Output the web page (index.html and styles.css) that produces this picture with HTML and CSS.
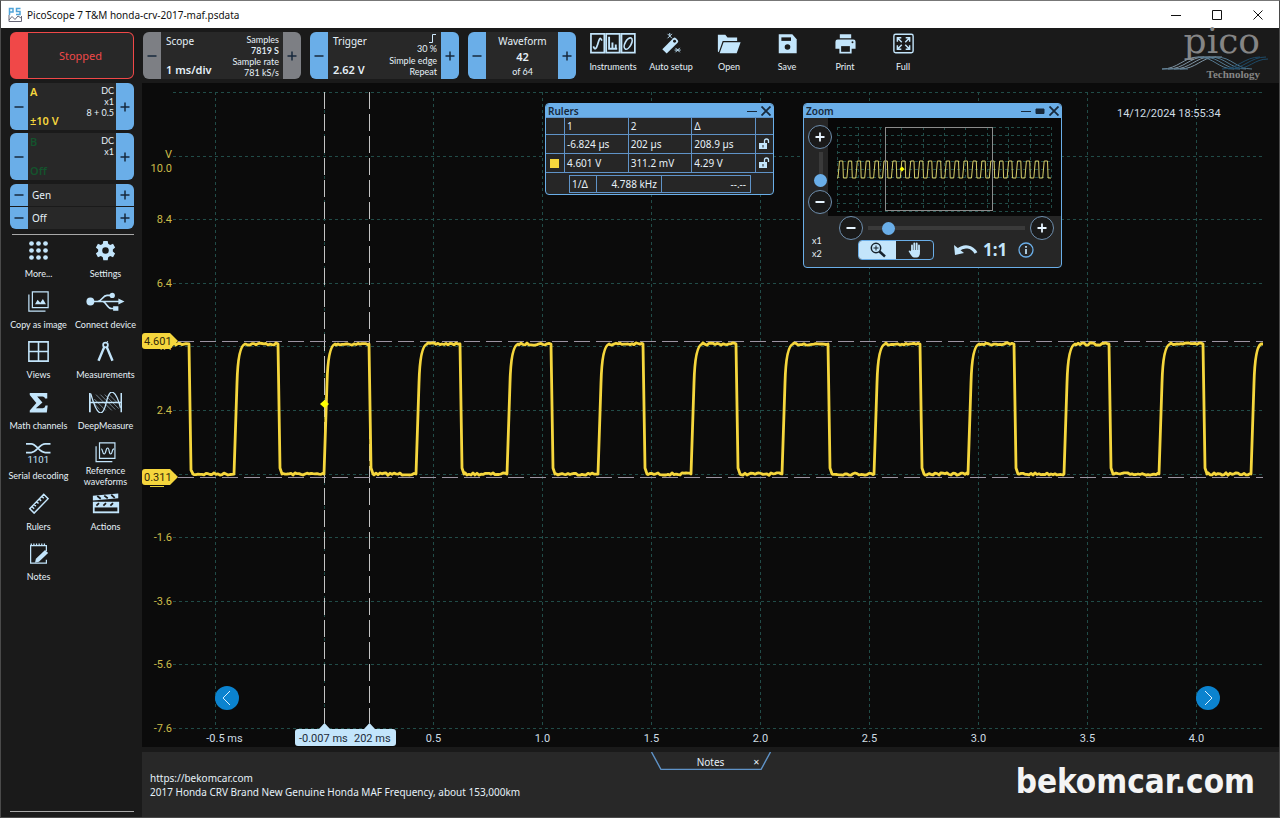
FILE: index.html
```html
<!DOCTYPE html>
<html lang="en">

<head>
  <meta charset="utf-8">
  <meta name="viewport" content="width=device-width, initial-scale=1">
  <title>PicoScope 7 T&amp;M honda-crv-2017-maf.psdata</title>
  <link rel="stylesheet" href="styles.css">
</head>

<body>
  <div class="app">
    <header class="titlebar">
      <svg class="app-icon" viewBox="0 0 14 16"><path d="M1.500 8V1.500h3.500v3.500H1.500M12.500 1.500H8.500v3h3.500v3H8" fill="none" stroke="#4fa3d8" stroke-width="1.500"/><path d="M1 8v6.500h12.500V9M1 13l3-3.500 3 3 3-3.500 3 2" fill="none" stroke="#667" stroke-width="1"/></svg>
      <h1>PicoScope 7 T&amp;M honda-crv-2017-maf.psdata</h1>
      <div class="window-buttons">
        <button aria-label="Minimize"><svg viewBox="0 0 10 10"><path d="M0 5.500h10"/></svg></button>
        <button aria-label="Maximize"><svg viewBox="0 0 10 10"><path d="M.5.5h9v9h-9z"/></svg></button>
        <button aria-label="Close"><svg viewBox="0 0 10 10"><path d="M.5.5l9 9M9.500.5l-9 9"/></svg></button>
      </div>
    </header>

    <div class="toolbar">
      <button class="stopped">Stopped</button>
      <div class="stepper scope">
        <button class="step" aria-label="Scope minus"><svg viewBox="0 0 12 12"><path d="M1.500 6h9"/></svg></button>
        <div class="stepper-body">
          <div class="col"><span>Scope</span><b>1 ms/div</b></div>
          <div class="col right small"><span>Samples</span><b>7819 S</b><span>Sample rate</span><span>781 kS/s</span></div>
        </div>
        <button class="step" aria-label="Scope plus"><svg viewBox="0 0 12 12"><path d="M1.500 6h9M6 1.500v9"/></svg></button>
      </div>
      <div class="stepper trigger">
        <button class="step" aria-label="Trigger minus"><svg viewBox="0 0 12 12"><path d="M1.500 6h9"/></svg></button>
        <div class="stepper-body">
          <div class="col"><span>Trigger</span><b>2.62 V</b></div>
          <div class="col right small">
            <svg class="edge" viewBox="0 0 8 9"><path d="M0 8.500h3.500v-8H7" fill="none" stroke="#cfe9fb"/></svg>
            <span>30 %</span><span>Simple edge</span><span>Repeat</span>
          </div>
        </div>
        <button class="step" aria-label="Trigger plus"><svg viewBox="0 0 12 12"><path d="M1.500 6h9M6 1.500v9"/></svg></button>
      </div>
      <div class="stepper waveform">
        <button class="step" aria-label="Waveform minus"><svg viewBox="0 0 12 12"><path d="M1.500 6h9"/></svg></button>
        <div class="stepper-body">
          <div class="col center"><span>Waveform</span><b>42</b><span class="of">of 64</span></div>
        </div>
        <button class="step" aria-label="Waveform plus"><svg viewBox="0 0 12 12"><path d="M1.500 6h9M6 1.500v9"/></svg></button>
      </div>

      <nav class="actions">
        <button class="tool">
          <svg class="wide" viewBox="0 0 48 22"><g fill="none" stroke="#c3e5fb" stroke-width="1.800"><path d="M1 1h14v19.500H1zM17 1h14v19.500H17zM33 1h14v19.500H33z"/><path d="M3.500 14c1.500 4 3 3 4.500-2S10.500 3 12.500 8"/><path d="M20 4v12.500M23.500 10v6.500M27 12v4.500M19 16.500h9.500" stroke-width="2"/><ellipse cx="40" cy="11" rx="3.200" ry="6.500" transform="rotate(28 40 11)"/></g></svg>
          <span>Instruments</span>
        </button>
        <button class="tool">
          <svg viewBox="0 0 24 24"><g fill="#c3e5fb"><path d="M1.500 18.500L14 6q1.500-1.500 3 0l2 2q1.500 1.500 0 3L6.500 23.500z"/><circle cx="15.500" cy="9.500" r="1.700" fill="#1a1a1a"/></g><path d="M7.500 1l5 5M12.500 1l-5 5M10 0v3M16.500 17l5 5M21.500 17l-5 5M15.500 19.500h7" stroke="#c3e5fb" stroke-width="1.100"/></svg>
          <span>Auto setup</span>
        </button>
        <button class="tool">
          <svg class="wide" viewBox="0 0 28 24"><path d="M1 21V2h8.500l2.500 3h11v4H6.500L2 22zM7.500 10.500H27L22.500 23H3z" fill="#c3e5fb"/></svg>
          <span>Open</span>
        </button>
        <button class="tool">
          <svg viewBox="0 0 24 24"><path d="M2 1.500h15.500L22.500 7v16H2z" fill="#c3e5fb"/><path d="M5 5h11v4H5z" fill="#1a1a1a"/><circle cx="12" cy="16" r="3.200" fill="#1a1a1a"/></svg>
          <span>Save</span>
        </button>
        <button class="tool">
          <svg viewBox="0 0 24 24"><path d="M5.500 1.500h13V6h-13zM3 7.500h18q2.500 0 2.500 2.500v8H19v5.500H5V18H.5v-8Q.5 7.500 3 7.500z" fill="#c3e5fb"/><path d="M7 15h10v6.500H7z" fill="#1a1a1a"/><circle cx="20" cy="10.500" r="1.100" fill="#1a1a1a"/></svg>
          <span>Print</span>
        </button>
        <button class="tool">
          <svg viewBox="0 0 24 24"><rect x="1" y="1.500" width="22" height="21" rx="2" fill="none" stroke="#c3e5fb" stroke-width="1.600"/><path d="M5 10V5.500h4.500M5 5.500l5 5M19 10V5.500h-4.500M19 5.500l-5 5M5 14v4.500h4.500M5 18.500l5-5M19 14v4.500h-4.500M19 18.500l-5-5" fill="none" stroke="#c3e5fb" stroke-width="1.700"/></svg>
          <span>Full</span>
        </button>
      </nav>

      <div class="logo">
        <svg class="logo-waves" viewBox="0 0 108 14"><g fill="none" stroke-width="1"><g stroke="#8095a5"><path d="M0 13C16 13 22 1 36 1h24"/><path d="M6 13C22 13 28 1 42 1"/><path d="M12 13C28 13 34 1 48 1"/><path d="M18 13C34 13 40 1 54 1"/></g><g stroke="#54788f"><path d="M36 1c16 0 20 12 36 12"/><path d="M42 1c16 0 20 12 36 12"/><path d="M48 1c16 0 20 12 36 12"/><path d="M54 1c16 0 20 12 36 12"/><path d="M0 13h26"/></g><g stroke="#1d4a68"><path d="M66 13c16 0 22-12 38-12M72 13c16 0 20-10 34-10M60 13c16 0 22-12 38-12"/></g></g></svg>
        <span class="logo-name">pico</span>
        <span class="logo-sub">Technology</span>
      </div>
    </div>

    <div class="main">
      <aside class="sidebar">
        <div class="stepper channel">
          <button class="step" aria-label="A minus"><svg viewBox="0 0 12 12"><path d="M1.500 6h9"/></svg></button>
          <div class="stepper-body ch-a">
            <div class="col"><b>A</b><b>±10 V</b></div>
            <div class="col right small"><span>DC</span><span>x1</span><span>8 + 0.5</span></div>
          </div>
          <button class="step" aria-label="A plus"><svg viewBox="0 0 12 12"><path d="M1.500 6h9M6 1.500v9"/></svg></button>
        </div>
        <div class="stepper channel">
          <button class="step" aria-label="B minus"><svg viewBox="0 0 12 12"><path d="M1.500 6h9"/></svg></button>
          <div class="stepper-body ch-b">
            <div class="col"><b>B</b><b>Off</b></div>
            <div class="col right small"><span>DC</span><span>x1</span></div>
          </div>
          <button class="step" aria-label="B plus"><svg viewBox="0 0 12 12"><path d="M1.500 6h9M6 1.500v9"/></svg></button>
        </div>
        <div class="gen">
          <div class="gen-row">
            <button class="step" aria-label="Gen minus"><svg viewBox="0 0 12 12"><path d="M1.500 6h9"/></svg></button>
            <span>Gen</span>
            <button class="step" aria-label="Gen plus"><svg viewBox="0 0 12 12"><path d="M1.500 6h9M6 1.500v9"/></svg></button>
          </div>
          <div class="gen-row">
            <button class="step" aria-label="Off minus"><svg viewBox="0 0 12 12"><path d="M1.500 6h9"/></svg></button>
            <span>Off</span>
            <button class="step" aria-label="Off plus"><svg viewBox="0 0 12 12"><path d="M1.500 6h9M6 1.500v9"/></svg></button>
          </div>
        </div>

        <nav class="tools">
          <button class="tool">
            <svg viewBox="0 0 24 24"><g fill="#c3e5fb"><circle cx="4" cy="4" r="2.700"/><circle cx="12" cy="4" r="2.700"/><circle cx="20" cy="4" r="2.700"/><circle cx="4" cy="12" r="2.700"/><circle cx="12" cy="12" r="2.700"/><circle cx="20" cy="12" r="2.700"/><circle cx="4" cy="20" r="2.700"/><circle cx="12" cy="20" r="2.700"/><circle cx="20" cy="20" r="2.700"/></g></svg>
            <span>More...</span>
          </button>
          <button class="tool">
            <svg viewBox="0 0 24 24"><path d="M9.500 1h5l.6 3.400 2.200 1.200 3.300-1.200 2.400 4.300-2.600 2.200v2.300l2.600 2.200-2.400 4.200-3.300-1.200-2.200 1.200-.6 3.400h-5l-.6-3.400-2.200-1.200-3.300 1.200L1 15.400l2.600-2.200v-2.300L1 8.700l2.400-4.300 3.300 1.200 2.200-1.200z" fill="#c3e5fb"/><circle cx="12" cy="12" r="3.700" fill="#1a1a1a"/></svg>
            <span>Settings</span>
          </button>
          <button class="tool">
            <svg viewBox="0 0 24 24"><g fill="none" stroke="#c3e5fb" stroke-width="1.400"><path d="M5 1h18v18H5z"/><path d="M1 4v19h19"/></g><path d="M8 15l3-5 3 3.500 3-4.500 3.500 6z" fill="#c3e5fb"/></svg>
            <span>Copy as image</span>
          </button>
          <button class="tool">
            <svg class="wide" viewBox="0 0 44 24"><g fill="none" stroke="#c3e5fb" stroke-width="1.800"><path d="M5 12h33M13 12c5 0 6-7 11-7h5M19 12c4 0 5 8 10 8h4"/></g><g fill="#c3e5fb"><circle cx="5" cy="12" r="4.500"/><circle cx="30" cy="5" r="3"/><path d="M31 17.500h6v5h-6zM37 8.500l7 3.500-7 3.500z"/></g></svg>
            <span>Connect device</span>
          </button>
          <button class="tool">
            <svg viewBox="0 0 24 24"><path d="M1 1h22v22H1zM12 1v22M1 12h22" fill="none" stroke="#c3e5fb" stroke-width="1.800"/></svg>
            <span>Views</span>
          </button>
          <button class="tool">
            <svg viewBox="0 0 24 24"><g fill="none" stroke="#c3e5fb"><circle cx="12" cy="4.500" r="2.700" stroke-width="2"/><path d="M10.500 7L4 22.500M13.500 7L20 22.500" stroke-width="2.800"/><path d="M13 1.500l2-1.500"/></g></svg>
            <span>Measurements</span>
          </button>
          <button class="tool">
            <svg viewBox="0 0 24 24"><path d="M2 1h20v6.500h-2.500q-.5-2.500-3-2.500H10.500L16.500 12l-7.500 6.500h8q2.500 0 3-3H22.500L21.500 23.500H2V21l7.500-8.500L2 3.500z" fill="#c3e5fb"/></svg>
            <span>Math channels</span>
          </button>
          <button class="tool">
            <svg class="wide" viewBox="0 0 38 24"><g fill="none" stroke="#c3e5fb"><path d="M1 1v22M37 1v22" stroke-width="2"/><path d="M1 12h36M2 2c8 28 14 27 18 9S31-1 36 18" stroke-width="1.500"/><path d="M8 3l18 18M13 3l17 17M18 3l16 16M23 3l10 10M6 8l13 13M5 12l7 8" stroke-width=".6"/></g></svg>
            <span>DeepMeasure</span>
          </button>
          <button class="tool">
            <svg class="wide" viewBox="0 0 28 24"><g fill="none" stroke="#c3e5fb" stroke-width="2"><path d="M0 2h6c6 0 9 10 16 10h6M0 12h6c6 0 9-10 16-10h6"/></g><text x="14" y="24" text-anchor="middle" class="icon-text">1101</text></svg>
            <span>Serial decoding</span>
          </button>
          <button class="tool two-line">
            <svg viewBox="0 0 24 24"><g fill="none" stroke="#c3e5fb" stroke-width="1.400"><path d="M5 1h18v18H5z"/><path d="M1 5v18h19"/><path d="M7 8c2 0 1 6 3.500 6S12 7 14.500 7s1 7 3.500 7 1-6 4-6"/></g></svg>
            <span>Reference<br>waveforms</span>
          </button>
          <button class="tool">
            <svg viewBox="0 0 24 24"><path d="M2 18L18 1.500l5 5L7 23zM16 4l2 2M13 7l2 2M10 10l2 2M7 13l2 2M5 16l2 2" fill="none" stroke="#c3e5fb" stroke-width="1.700"/></svg>
            <span>Rulers</span>
          </button>
          <button class="tool">
            <svg class="wide" viewBox="0 0 32 24"><path d="M1 3l29-2.500V6L1 8.500zM1 10h30v13H1z" fill="#c3e5fb"/><path d="M6 3.500l4 3M14 3l4 3M22 2l4 3.500M8 11.500l-3 3M16 11.500l-3 3M24 11.500l-3 3" stroke="#1a1a1a" stroke-width="2"/><path d="M3 16.500h26V21H3z" fill="#1a1a1a"/></svg>
            <span>Actions</span>
          </button>
          <button class="tool">
            <svg viewBox="0 0 24 24"><path d="M21 9V3H3v20h18v-4" fill="none" stroke="#c3e5fb" stroke-width="1.400"/><path d="M3 2h18" stroke="#c3e5fb" stroke-width="3" stroke-dasharray="1.500 1.500"/><path d="M9 18L19.500 8l3.500 3.500L12.500 21.500 8 22.500z" fill="#c3e5fb"/></svg>
            <span>Notes</span>
          </button>
        </nav>
      </aside>

      <section class="workspace">
        <div class="chart">
          <svg class="plot" viewBox="0 0 1137 664">
            <g id="grid"></g>
            <g id="labels"></g>
            <text class="axis x" x="975" y="34">14/12/2024 18:55:34</text>
            <g class="ruler">
              <path d="M182.500 9v631M227.500 9v631" class="time"/>
              <path d="M36 258.500h1085M36 394.500h1085" class="volt"/>
            </g>
            <path id="trace"/>
            <path d="M182.500 317l4.500 4-4.500 4-4.500-4z" fill="#ff0"/>
            <path d="M8 403.500h14" stroke="#e6cf3a"/>
            <g class="tag">
              <path d="M3 250h25l8 8-8 8H3q-3 0-3-3v-10q0-3 3-3z"/>
              <text x="2" y="262">4.601</text>
              <path d="M3 386h25l8 8-8 8H3q-3 0-3-3v-10q0-3 3-3z"/>
              <text x="2" y="398">0.311</text>
            </g>
            <g class="time-tag">
              <path d="M156 646h21l5.500-6 5.500 6h34l5.500-6 5.500 6h18q3 0 3 3v11q0 3-3 3h-95q-3 0-3-3v-11q0-3 3-3z"/>
              <text x="157" y="659">-0.007 ms</text>
              <text x="212" y="659">202 ms</text>
            </g>
          </svg>

          <button class="page-button prev" aria-label="Previous"><svg viewBox="0 0 24 24"><path d="M15 5l-7 7 7 7"/></svg></button>
          <button class="page-button next" aria-label="Next"><svg viewBox="0 0 24 24"><path d="M9 5l7 7-7 7"/></svg></button>

          <div class="panel rulers">
            <div class="panel-head">
              <h2>Rulers</h2>
              <button aria-label="Minimize rulers"><svg viewBox="0 0 10 10"><path d="M0 5.500h10"/></svg></button>
              <button aria-label="Close rulers"><svg viewBox="0 0 10 10"><path d="M.5.5l9 9M9.500.5l-9 9" stroke-width="1.800"/></svg></button>
            </div>
            <table class="values">
              <tr><td></td><th>1</th><th>2</th><th>Δ</th><td></td></tr>
              <tr><td></td><td>-6.824 µs</td><td>202 µs</td><td>208.9 µs</td><td><button class="lock" aria-label="Lock time"><svg viewBox="0 0 12 12"><path d="M1 5h8v6H1z" fill="#c3e5fb"/><path d="M6.500 5V3q0-2 2-2t2 2v2" fill="none" stroke="#c3e5fb" stroke-width="1.300"/><path d="M5 7v2.500" stroke="#222"/></svg></button></td></tr>
              <tr><td><i class="swatch"></i></td><td>4.601 V</td><td>311.2 mV</td><td>4.29 V</td><td><button class="lock" aria-label="Lock voltage"><svg viewBox="0 0 12 12"><path d="M1 5h8v6H1z" fill="#c3e5fb"/><path d="M6.500 5V3q0-2 2-2t2 2v2" fill="none" stroke="#c3e5fb" stroke-width="1.300"/><path d="M5 7v2.500" stroke="#222"/></svg></button></td></tr>
            </table>
            <table class="freq">
              <tr><th>1/Δ</th><td>4.788 kHz</td><td>--.--</td></tr>
            </table>
          </div>

          <div class="panel zoom">
            <div class="panel-head">
              <h2>Zoom</h2>
              <button aria-label="Minimize zoom"><svg viewBox="0 0 10 10"><path d="M0 5.500h10"/></svg></button>
              <button aria-label="Collapse zoom"><svg viewBox="0 0 10 10"><path d="M1 3h8v4.500H1z" fill="#17293c"/></svg></button>
              <button aria-label="Close zoom"><svg viewBox="0 0 10 10"><path d="M.5.5l9 9M9.500.5l-9 9" stroke-width="1.800"/></svg></button>
            </div>
            <div class="zoom-view">
              <div class="zoom-side">
                <button class="round" aria-label="Zoom in vertically"><svg viewBox="0 0 12 12"><path d="M1.500 6h9M6 1.500v9"/></svg></button>
                <input type="range" class="vertical" aria-label="Vertical zoom" value="0">
                <button class="round" aria-label="Zoom out vertically"><svg viewBox="0 0 12 12"><path d="M1.500 6h9"/></svg></button>
              </div>
              <svg class="overview" viewBox="0 0 233 98">
                <g id="mini-grid"></g>
                <path id="mini-trace"/>
                <rect x="57.500" y="9.500" width="107" height="83" fill="none" stroke="#8c8c8c"/>
                <path d="M74 48.500l2.500 2.500-2.500 2.500-2.500-2.500z" fill="#ff0"/>
              </svg>
            </div>
            <div class="zoom-controls">
              <div class="factors"><span>x1</span><span>x2</span></div>
              <div class="zoom-rows">
                <div class="zoom-row">
                  <button class="round" aria-label="Zoom out"><svg viewBox="0 0 12 12"><path d="M1.500 6h9"/></svg></button>
                  <input type="range" aria-label="Horizontal zoom" value="10">
                  <button class="round" aria-label="Zoom in"><svg viewBox="0 0 12 12"><path d="M1.500 6h9M6 1.500v9"/></svg></button>
                </div>
                <div class="zoom-row modes">
                  <div class="toggle">
                    <button class="active" aria-label="Zoom tool"><svg viewBox="0 0 16 16"><circle cx="6" cy="6" r="4.700" fill="none" stroke="#17222c" stroke-width="1.500"/><path d="M3.500 6h5M6 3.500v5" stroke="#17222c"/><path d="M9.500 9.500l5.500 5" stroke="#17222c" stroke-width="2.500"/></svg></button>
                    <button aria-label="Pan tool"><svg viewBox="0 0 16 16"><path d="M5 11V3.500M7.300 9V1.500M9.700 9V1.500M12 9.500V3.500" stroke="#c3e5fb" stroke-width="1.800" stroke-linecap="round"/><path d="M4.100 8h8.800v4q-1 3.500-3 3.500H7q-2 0-5.500-6.500 1.500-1 2.600.5z" fill="#c3e5fb"/></svg></button>
                  </div>
                  <button class="plain undo" aria-label="Undo zoom"><svg viewBox="0 0 24 14"><path d="M4 7c6-5 14-4 18 3" fill="none" stroke="#c3e5fb" stroke-width="3.200"/><path d="M0 2l1 10 9-2z" fill="#c3e5fb"/></svg></button>
                  <button class="plain ratio">1:1</button>
                  <button class="plain info" aria-label="Info"><svg viewBox="0 0 16 16"><circle cx="8" cy="8" r="7" fill="none" stroke="#6aaee8" stroke-width="1.300"/><path d="M8 7v5M8 4v1.800" stroke="#c3e5fb" stroke-width="1.700"/></svg></button>
                </div>
              </div>
            </div>
          </div>
        </div>

        <div class="notes">
          <div class="notes-tab">
            <svg viewBox="0 0 120 18"><path d="M.5 0L10 17.500h100L119.500 0" fill="none" stroke="#5f93c8" stroke-width="1.400"/></svg>
            <span>Notes</span>
            <button aria-label="Close notes">✕</button>
          </div>
          <div class="notes-body">
            <p>https://bekomcar.com<br>2017 Honda CRV Brand New Genuine Honda MAF Frequency, about 153,000km</p>
            <strong class="watermark">bekomcar.com</strong>
          </div>
        </div>
      </section>
    </div>
  </div>
  <script src="scope.js"></script>
</body>

</html>
```

FILE: styles.css
```css
/* Variables */
:root {
  --bar: #1a1a1a;
  --card: #282828;
  --plot: #0b0b0b;
  --blue: #6aaee8;
  --pale: #c3e5fb;
  --ink: #17293c;
  --yellow: #f5d63d;
}

*, ::after, ::before {
  box-sizing: border-box;
  margin: 0;
  padding: 0;
}
body {
  font: 10px/14px "Noto Sans", "Open Sans", sans-serif;
  background: var(--bar);
  color: #e6f1f8;
}
button {
  font: inherit;
  color: inherit;
  background: none;
  border: none;
  cursor: pointer;
}
svg {
  display: block;
}
b, h2 {
  font-weight: 600;
}
.app {
  display: flex;
  flex-direction: column;
  min-height: 100vh;
  border: 1px solid #4a4a4a;
  border-top-color: #777;
}

/* Title bar */
.titlebar {
  display: flex;
  align-items: center;
  height: 27px;
  padding: 0 6px 0 7px;
  background: #fff;
  color: #111;
}
.app-icon {
  width: 14px;
  height: 16px;
  margin-right: 5px;
}
.titlebar h1 {
  flex: 1;
  font-size: 10px;
  font-weight: 400;
}
.window-buttons {
  display: flex;
  gap: 11px;
}
.window-buttons button {
  padding: 8px 10px;
}
.window-buttons svg {
  width: 10px;
  height: 10px;
  fill: none;
  stroke: #111;
}

/* Toolbar */
.toolbar {
  display: flex;
  gap: 9px;
  height: 55px;
  padding: 4px 9px;
  background: var(--bar);
}
.stopped {
  width: 124px;
  border: 1px solid #f04848;
  border-left-width: 18px;
  border-radius: 6px;
  background: var(--card);
  color: #f04848;
  font-size: 11px;
}
.stepper {
  display: flex;
  background: var(--card);
  border-radius: 6px;
  overflow: hidden;
}
.scope {
  width: 158px;
}
.trigger {
  width: 149px;
}
.waveform {
  width: 108px;
}
.step {
  display: flex;
  align-items: center;
  justify-content: center;
  width: 18px;
  background: var(--blue);
}
.scope .step {
  background: #7d7f84;
}
.step svg {
  width: 12px;
  height: 12px;
  stroke: var(--ink);
  stroke-width: 1.5;
}
.stepper-body {
  display: flex;
  flex: 1;
  justify-content: space-between;
  padding: 2px 4px 2px 5px;
}
.col {
  display: flex;
  flex-direction: column;
  justify-content: space-between;
}
.col b {
  font-size: 11px;
}
.right {
  align-items: flex-end;
}
.center {
  flex: 1;
  align-items: center;
}
.small, .small b, .of {
  font-family: Lato, sans-serif;
  font-size: 9px;
  line-height: 11px;
}
.edge {
  width: 8px;
  height: 9px;
}
.actions {
  display: flex;
  margin-left: -1px;
}
.actions .tool {
  width: 58px;
}
.tool {
  display: flex;
  flex-direction: column;
  align-items: center;
  font-family: Lato, sans-serif;
  font-size: 9px;
  line-height: 11px;
  white-space: nowrap;
}
.tool svg {
  width: 21px;
  height: 21px;
  margin: 1px 0 7px;
}
.tool svg.wide {
  width: auto;
}

/* Logo */
.logo {
  position: relative;
  display: flex;
  flex-direction: column;
  align-items: flex-end;
  width: 108px;
  margin-left: auto;
  padding-right: 10px;
  color: #858585;
}
.logo-name {
  font: 36px/17px "DejaVu Serif", serif;
}
.logo-sub {
  font: bold 11px/12px "Liberation Serif", serif;
  margin-top: 19px;
}
.logo-waves {
  position: absolute;
  top: 24px;
  left: 0;
  width: 108px;
}

/* Sidebar */
.main {
  display: flex;
  flex: 1;
}
.sidebar {
  display: flex;
  flex-direction: column;
  width: 141px;
  padding: 0 8px 5px 9px;
}
.sidebar::after {
  content: "";
  width: 124px;
  margin-top: auto;
  border-top: 1px solid #a8a8a8;
}
.channel {
  width: 124px;
  height: 47px;
  margin-bottom: 3px;
}
.channel .stepper-body {
  padding: 2px;
}
.channel .small {
  justify-content: flex-start;
}
.ch-a b {
  color: var(--yellow);
}
.ch-b b {
  color: #14532d;
}
.gen {
  display: flex;
  flex-direction: column;
  gap: 1px;
  width: 124px;
  margin-top: 1px;
  border-radius: 6px;
  overflow: hidden;
}
.gen-row {
  display: flex;
  align-items: center;
  background: var(--card);
}
.gen-row span {
  flex: 1;
  padding-left: 4px;
}
.gen-row .step {
  height: 22px;
}
.tools {
  position: relative;
  display: grid;
  grid-template-columns: 1fr 1fr;
  grid-template-rows: repeat(7, minmax(0, 1fr));
  width: 134px;
  height: 354px;
  margin: 5px 0 0 -5px;
}
.tools::before {
  content: "";
  position: absolute;
  top: 0;
  left: 7px;
  right: 5px;
  border-top: 1px solid #a8a8a8;
}
.tools .tool {
  justify-content: flex-start;
  padding-top: 5px;
}
.tools .two-line svg {
  margin-bottom: 2px;
}
.icon-text {
  font: 11px Roboto, sans-serif;
  fill: var(--pale);
}

/* Plot */
.workspace {
  display: flex;
  flex: 1;
  flex-direction: column;
  gap: 5px;
}
.chart {
  position: relative;
  background: var(--plot);
}
.plot {
  width: 100%;
}
.grid-line {
  fill: none;
  stroke: #214c48;
  stroke-dasharray: 3 3;
}
.plot text {
  font: 11px Roboto, sans-serif;
}
.axis {
  fill: #cfdde4;
}
.axis.x.tick {
  text-anchor: middle;
}
.axis.y {
  fill: #cdbd4a;
  text-anchor: end;
}
.time {
  stroke: #c4c4c4;
  stroke-dasharray: 17 5;
}
.volt {
  stroke: #9c93a2;
  stroke-dasharray: 16 6;
}
#trace {
  fill: none;
  stroke: var(--yellow);
  stroke-width: 2.8;
  stroke-linejoin: round;
}
.tag path {
  fill: var(--yellow);
}
.tag text {
  fill: #33290a;
}
.time-tag path {
  fill: var(--pale);
}
.time-tag text {
  fill: #1c2b38;
}
.page-button {
  position: absolute;
  bottom: 37px;
  width: 24px;
  height: 24px;
  border-radius: 50%;
  background: #0b83cf;
}
.page-button svg {
  fill: none;
  stroke: #d9efff;
}
.prev {
  left: 73px;
}
.next {
  right: 59px;
}

/* Floating panels */
.panel {
  position: absolute;
  top: 20px;
  background: #262626;
  border: 1px solid var(--blue);
  border-radius: 4px;
  overflow: hidden;
}
.panel-head {
  display: flex;
  align-items: center;
  gap: 4px;
  height: 14px;
  padding: 0 2px;
  background: var(--blue);
  color: var(--ink);
}
.panel-head h2 {
  flex: 1;
  font-size: 10px;
}
.panel-head svg {
  width: 10px;
  height: 10px;
  fill: none;
  stroke: var(--ink);
}
.rulers {
  left: 403px;
  width: 229px;
}
.rulers table {
  border-collapse: collapse;
  table-layout: fixed;
}
.rulers th {
  font-weight: 400;
  text-align: left;
}
.rulers td, .rulers th {
  border: 1px solid #5f93c8;
  padding: 0 2px;
}
.rulers .values {
  width: 229px;
  margin: -1px 0 0 -1px;
}
.values tr {
  height: 19px;
}
.values tr:first-child {
  height: 17px;
}
.values td:first-child {
  width: 19px;
}
.values td:last-child {
  width: 18px;
}
.swatch {
  display: block;
  width: 9px;
  height: 9px;
  margin-left: 2px;
  background: var(--yellow);
}
.lock {
  display: block;
}
.lock svg {
  width: 12px;
  height: 12px;
}
.freq {
  width: 182px;
  height: 18px;
  margin: 2px 0 1px 23px;
}
.freq th {
  width: 27px;
}
.freq td {
  text-align: right;
  padding-right: 4px;
}
.freq td:nth-child(2) {
  width: 65px;
}

.zoom {
  left: 661px;
  width: 259px;
}
.zoom-view {
  display: flex;
}
.zoom-side {
  display: flex;
  flex-direction: column;
  width: 24px;
  padding: 7px 0 0 4px;
}
.overview {
  width: 233px;
  background: #080808;
}
#mini-trace {
  fill: none;
  stroke: #d8cf6a;
}
.round {
  position: relative;
  z-index: 1;
  display: flex;
  flex: none;
  align-items: center;
  justify-content: center;
  width: 24px;
  height: 24px;
  border: 1px solid #6f8fae;
  border-radius: 50%;
  background: var(--bar);
}
.round svg {
  width: 12px;
  height: 12px;
  stroke: #e8f5ff;
  stroke-width: 1.8;
}
input[type=range] {
  appearance: none;
  flex: 1;
  min-width: 0;
  height: 13px;
  background: linear-gradient(#3a3a3a, #3a3a3a) center / 100% 4px no-repeat;
}
input[type=range]::-webkit-slider-thumb {
  appearance: none;
  width: 13px;
  height: 13px;
  border-radius: 50%;
  background: var(--blue);
}
input[type=range].vertical {
  writing-mode: vertical-lr;
  direction: rtl;
  flex: none;
  width: 13px;
  height: 35px;
  margin: 3px 0 3px 6px;
  background-size: 4px 100%;
}
.zoom-controls {
  display: flex;
  padding-bottom: 7px;
}
.factors {
  display: flex;
  flex-direction: column;
  justify-content: flex-end;
  width: 35px;
  padding-left: 8px;
  font: 9px/13px Lato, sans-serif;
}
.zoom-rows {
  flex: 1;
  padding-right: 7px;
}
.zoom-row {
  display: flex;
  align-items: center;
  gap: 5px;
}
.modes {
  padding-left: 19px;
}
.toggle {
  display: flex;
  width: 76px;
  height: 20px;
  border: 1px solid var(--blue);
  border-radius: 4px;
  overflow: hidden;
}
.toggle button {
  display: flex;
  flex: 1;
  align-items: center;
  justify-content: center;
}
.toggle .active {
  background: var(--pale);
}
.toggle svg {
  width: 16px;
  height: 16px;
}
.undo {
  width: 24px;
  margin-left: 15px;
}
.ratio {
  font-size: 17px;
  font-weight: 700;
  line-height: 20px;
  color: var(--pale);
}
.info {
  width: 16px;
  margin-left: 6px;
}

/* Notes */
.notes {
  flex: 1;
  background: var(--card);
}
.notes-tab {
  position: relative;
  display: flex;
  align-items: center;
  justify-content: center;
  width: 120px;
  height: 19px;
  margin: 0 auto;
}
.notes-tab svg {
  position: absolute;
  top: 0;
  left: 0;
  width: 120px;
}
.notes-tab button {
  position: absolute;
  right: 11px;
  font-size: 8px;
}
.notes-body {
  display: flex;
  justify-content: space-between;
  padding: 0 24px 0 8px;
}
.watermark {
  font: bold 33px/22px "DejaVu Sans Condensed", "DejaVu Sans", sans-serif;
  color: #f4f4f4;
}
```

FILE: scope.js
```js
const LEFT = 31, RIGHT = 1121, TOP = 9, BOTTOM = 645;
const STEP_X = 109, STEP_Y = 63.6;
const HIGH = 261, LOW = 391;

// Grid and axis labels
const grid = document.querySelector("#grid");
const labels = document.querySelector("#labels");
const volts = ["", "", "8.4", "6.4", "4.4", "2.4", "", "-1.6", "-3.6", "-5.6", "-7.6"];
const times = ["-0.5 ms", "", "0.5", "1.0", "1.5", "2.0", "2.5", "3.0", "3.5", "4.0"];

volts.forEach((v, i) => {
  const y = Math.round(TOP + i * STEP_Y) + 0.5;
  grid.innerHTML += `<path class="grid-line" d="M${LEFT} ${y}H${RIGHT}"/>`;
  labels.innerHTML += `<text class="axis y" x="30" y="${y + 3.5}">${v}</text>`;
});
times.forEach((t, i) => {
  const x = 73.5 + i * STEP_X;
  grid.innerHTML += `<path class="grid-line" d="M${x} ${TOP}V${BOTTOM}"/>`;
  labels.innerHTML += `<text class="axis x tick" x="${i ? x : x + 9}" y="659">${t}</text>`;
});
labels.innerHTML += `<text class="axis y" x="30" y="75">V</text><text class="axis y" x="30" y="89">10.0</text>`;

// Repeatable noise
let seed = 7;
function noise() {
  seed = (seed * 16807) % 2147483647;
  return seed / 2147483647 - 0.5;
}
function flat(from, to, y) {
  let d = "";
  for (let x = from; x < to; x += 2) {
    d += `L${x} ${(y + noise() * 2.4).toFixed(1)}`;
  }
  return d;
}

// Captured pulses: x of each rise and of the fall after it
const pulses = [[92, 137], [182, 228], [274, 319], [365, 410], [456, 502], [549, 595], [640, 687], [732, 779], [826, 873], [922, 968], [1017, 1062]];
let d = `M30 ${HIGH}` + flat(32, 46, HIGH) + `L47 ${HIGH}L49 ${LOW - 4}L51 ${LOW}`;
let last = 51;
for (const [rise, fall] of pulses) {
  d += flat(last + 1, rise, LOW);
  d += `L${rise} ${LOW}L${rise + 3} 300Q${rise + 4} ${HIGH + 2} ${rise + 11} ${HIGH}`;
  d += flat(rise + 12, fall - 1, HIGH);
  d += `L${fall - 1} ${HIGH}L${fall + 1} ${LOW - 6}L${fall + 3} ${LOW}`;
  last = fall + 3;
}
d += flat(last + 1, 1109, LOW) + `L1109 ${LOW}L1112 300Q1113 264 1119 261H1121`;
document.querySelector("#trace").setAttribute("d", d);

// Overview in the zoom panel
const mini = document.querySelector("#mini-grid");
for (let i = 0; i <= 10; i++) {
  const x = Math.round(9 + i * 21.4) + 0.5;
  const y = Math.round(9 + i * 8.4) + 0.5;
  mini.innerHTML += `<path class="grid-line" d="M${x} 9V93M9 ${y}H223"/>`;
}
let m = "M9 60";
for (let x = 10; x < 220; x += 8.9) {
  m += `H${x.toFixed(1)}L${(x + 1.5).toFixed(1)} 43H${(x + 4.8).toFixed(1)}L${(x + 5.4).toFixed(1)} 60`;
}
document.querySelector("#mini-trace").setAttribute("d", m + "H223");
```
